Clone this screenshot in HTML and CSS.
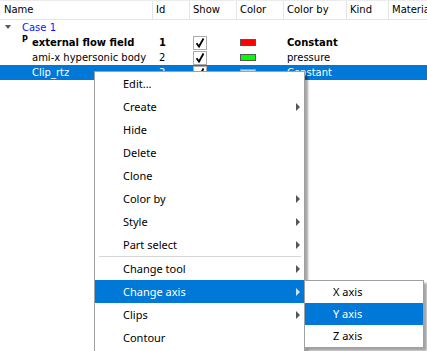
FILE: index.html
```html
<!DOCTYPE html>
<html lang="en">
<head>
  <meta charset="UTF-8">
  <title>Parts</title>
  <link rel="stylesheet" href="styles.css">
</head>
<body>
  <div class="tree">
    <div class="head">
      <div class="hc first">Name</div>
      <div class="hc">Id</div>
      <div class="hc">Show</div>
      <div class="hc">Color</div>
      <div class="hc">Color by</div>
      <div class="hc">Kind</div>
      <div class="hc last">Materia</div>
    </div>

    <div class="row">
      <div class="name case"><span class="twisty"></span>Case 1</div>
    </div>

    <div class="row bold">
      <div class="name part"><span class="tag">P</span>external flow field</div>
      <div class="id">1</div>
      <div class="show"><span class="check"><svg width="12" height="12" viewBox="0 0 12 12"><path d="M2.5 6.2 L5 9.5 L9.5 1.5" fill="none" stroke="#000" stroke-width="1.8"/></svg></span></div>
      <div class="color"><span class="swatch red"></span></div>
      <div class="by">Constant</div>
    </div>

    <div class="row">
      <div class="name part">ami-x hypersonic body</div>
      <div class="id">2</div>
      <div class="show"><span class="check"><svg width="12" height="12" viewBox="0 0 12 12"><path d="M2.5 6.2 L5 9.5 L9.5 1.5" fill="none" stroke="#000" stroke-width="1.8"/></svg></span></div>
      <div class="color"><span class="swatch green"></span></div>
      <div class="by">pressure</div>
    </div>

    <div class="row selected">
      <div class="name part">Clip_rtz</div>
      <div class="id">3</div>
      <div class="show"><span class="check"><svg width="12" height="12" viewBox="0 0 12 12"><path d="M2.5 6.2 L5 9.5 L9.5 1.5" fill="none" stroke="#000" stroke-width="1.8"/></svg></span></div>
      <div class="color"><span class="swatch pale"></span></div>
      <div class="by">Constant</div>
    </div>
  </div>

  <!-- context menu -->
  <div class="menu">
    <div class="item">Edit...</div>
    <div class="item sub">Create</div>
    <div class="item">Hide</div>
    <div class="item">Delete</div>
    <div class="item">Clone</div>
    <div class="item sub">Color by</div>
    <div class="item sub">Style</div>
    <div class="item sub">Part select</div>
    <div class="sep"></div>
    <div class="item sub">Change tool</div>
    <div class="item sub active">Change axis</div>
    <div class="item sub">Clips</div>
    <div class="item">Contour</div>
  </div>

  <div class="menu submenu">
    <div class="item">X axis</div>
    <div class="item active">Y axis</div>
    <div class="item">Z axis</div>
  </div>
</body>
</html>
```

FILE: styles.css
```css
body {
  margin: 0;
  width: 427px;
  height: 351px;
  overflow: hidden;
  position: relative;
  background-color: #fff;
  color: #000;
  font-family: "DejaVu Sans", sans-serif;
  font-size: 10px;
}

.head,
.row {
  display: grid;
  grid-template-columns: 153px 37px 47px 47px 63px 42px 1fr;
}

.head {
  height: 20px;
  box-sizing: border-box;
  border-top: 1px solid #ececec;
  border-bottom: 1px solid #e5e5e5;
}

.hc {
  padding-left: 3px;
  line-height: 18px;
  border-right: 1px solid #e5e5e5;
  white-space: nowrap;
  overflow: hidden;
}

.hc.first {
  padding-left: 4px;
}

.hc.last {
  border-right: none;
}

.row {
  height: 15px;
  line-height: 15px;
  white-space: nowrap;
}

.row.bold {
  font-weight: bold;
}

.row.selected {
  background-color: #0078d7;
  color: #fff;
}

.name {
  display: flex;
  align-items: center;
  overflow: hidden;
}

.name.case {
  grid-column: 1 / -1;
  padding-left: 5px;
  color: #1414ff;
}

.name.part {
  padding-left: 32px;
}

.row.bold .name.part {
  padding-left: 22px;
}

.twisty {
  width: 0;
  height: 0;
  margin-right: 11px;
  margin-top: -1px;
  border-left: 3px solid transparent;
  border-right: 3px solid transparent;
  border-top: 4px solid #555;
}

.tag {
  width: 10px;
  font-size: 8px;
  line-height: 8px;
  align-self: flex-start;
  margin-top: 1px;
}

.id {
  padding-left: 6px;
}

.show {
  padding-left: 3px;
  display: flex;
  align-items: center;
}

.check {
  width: 12px;
  height: 12px;
  border: 1px solid #acacac;
  background-color: #fff;
  display: flex;
}

.color {
  padding-left: 3px;
  display: flex;
  align-items: center;
}

.swatch {
  width: 14px;
  height: 5px;
  border: 1px solid #555;
}

.swatch.red {
  background-color: #ff0000;
}

.swatch.green {
  background-color: #00ff00;
}

.swatch.pale {
  background-color: #c4d8ee;
  border-color: #7da2c8;
}

.by {
  padding-left: 3px;
}

/* context menu */
.menu {
  position: absolute;
  left: 94px;
  top: 71px;
  width: 211px;
  box-sizing: border-box;
  border: 1px solid #a0a0a0;
  background-color: #fff;
  box-shadow: 3px 3px 2px rgba(0, 0, 0, 0.35);
  font-family: "Noto Sans", sans-serif;
  font-size: 11px;
  padding-bottom: 6px;
}

.item {
  position: relative;
  height: 23px;
  line-height: 23px;
  padding-left: 28px;
}

.item.sub::after {
  content: "";
  position: absolute;
  right: 4px;
  top: 8px;
  border-left: 4px solid #555;
  border-top: 4px solid transparent;
  border-bottom: 4px solid transparent;
}

.item.active {
  background-color: #0078d7;
  color: #fff;
}

.item.active::after {
  border-left-color: #cfe3f7;
}

.sep {
  height: 1px;
  margin: 0 3px 0 4px;
  background-color: #d7d7d7;
}

.submenu {
  left: 304px;
  top: 280px;
  width: 120px;
  padding-bottom: 0;
}

.submenu .item {
  height: 22px;
  line-height: 22px;
}
```
